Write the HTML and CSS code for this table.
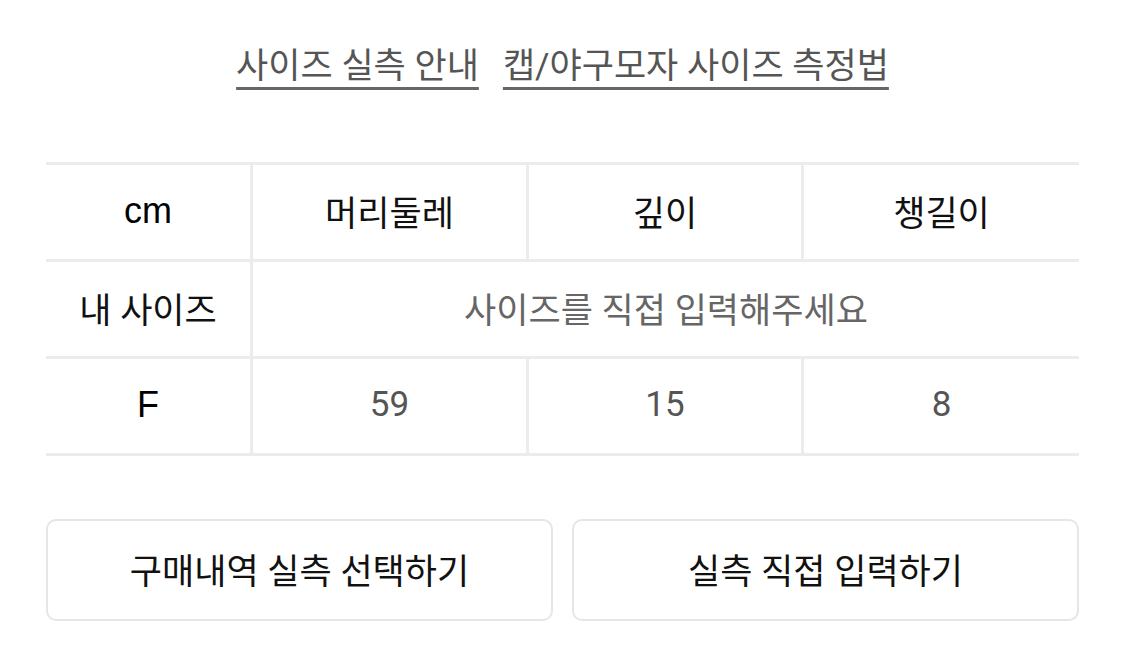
FILE: index.html
```html
<!DOCTYPE html>
<html lang="ko">
<head>
<meta charset="utf-8">
<link rel="stylesheet" href="styles.css">
</head>
<body>
<div class="page">
  <nav class="links">
    <a class="link" href="#">사이즈 실측 안내</a>
    <a class="link" href="#">캡/야구모자 사이즈 측정법</a>
  </nav>
  <div class="table">
    <div class="cell head latin">cm</div>
    <div class="cell head">머리둘레</div>
    <div class="cell head">깊이</div>
    <div class="cell head last">챙길이</div>
    <div class="cell head">내 사이즈</div>
    <div class="cell placeholder span">사이즈를 직접 입력해주세요</div>
    <div class="cell head latin">F</div>
    <div class="cell value">59</div>
    <div class="cell value">15</div>
    <div class="cell value last">8</div>
  </div>
  <div class="buttons">
    <button class="btn">구매내역 실측 선택하기</button>
    <button class="btn">실측 직접 입력하기</button>
  </div>
</div>
</body>
</html>
```
FILE: styles.css
```css
html, body {
  margin: 0;
  padding: 0;
  background: #fff;
}
body {
  font-family: Roboto, "Noto Sans CJK KR", sans-serif;
  color: #111;
}
.page {
  width: 1033px;
  margin-left: 46px;
  padding-top: 40px;
}
.links {
  display: flex;
  justify-content: center;
  gap: 24px;
  height: 122px;
}
.link {
  font-size: 35px;
  line-height: 54px;
  height: 54px;
  color: #555;
  text-decoration: underline;
  text-decoration-thickness: 3px;
  text-underline-offset: 9px;
  text-decoration-color: #666;
}
.table {
  display: grid;
  grid-template-columns: 207px 276px 275px 275px;
  grid-auto-rows: 97px;
  border-top: 3px solid #ececec;
}
.cell {
  display: flex;
  align-items: center;
  justify-content: center;
  font-size: 35px;
  border-bottom: 3px solid #ececec;
  border-right: 3px solid #ececec;
  box-sizing: border-box;
  padding-bottom: 3px;
}
.cell.last {
  border-right: none;
}
.head {
  font-weight: 400;
  color: #111;
}
.latin {
  font-family: "Liberation Sans", Arial, sans-serif;
  font-size: 36px;
  color: #000;
}
.value {
  color: #555;
  font-weight: 400;
}
.placeholder {
  color: #666;
  border-right: none;
}
.span {
  grid-column: span 3;
}
.buttons {
  display: flex;
  gap: 19px;
  margin-top: 63px;
}
.btn {
  flex: 1;
  height: 102px;
  background: #fff;
  border: 2px solid #e6e6e6;
  border-radius: 10px;
  font-family: Roboto, "Noto Sans CJK KR", sans-serif;
  font-size: 35px;
  font-weight: 400;
  color: #111;
  padding-bottom: 4px;
}
```
